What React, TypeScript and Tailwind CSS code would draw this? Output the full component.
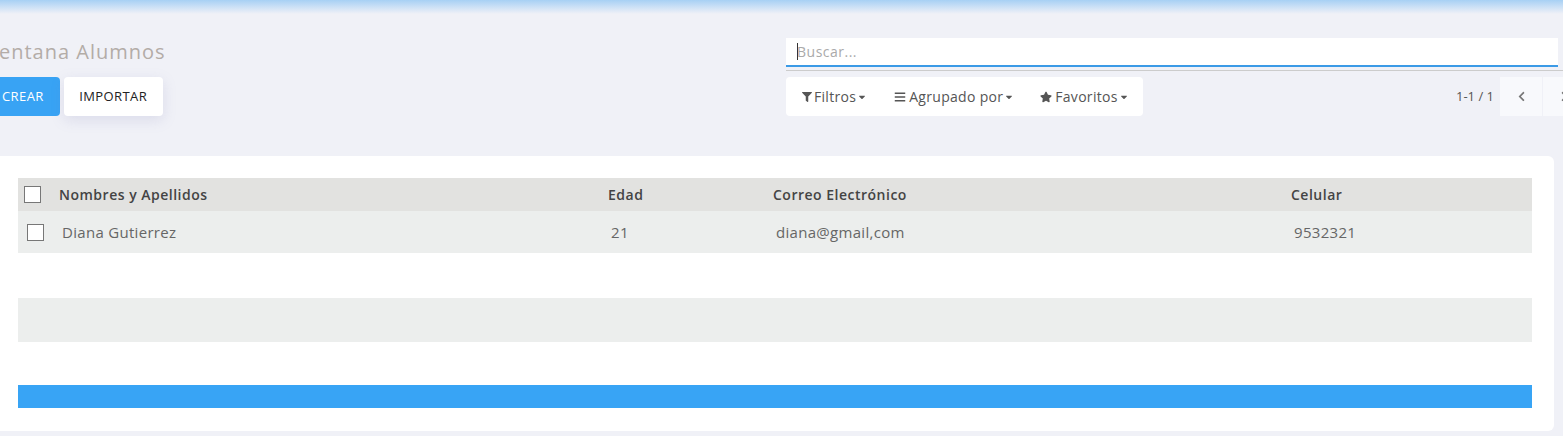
import { FaFilter, FaBars, FaStar, FaCaretDown, FaChevronLeft, FaChevronRight } from "react-icons/fa";

const font = { fontFamily: '"Open Sans", "Liberation Sans", sans-serif' };

const rows = [{ name: "Diana Gutierrez", edad: "21", correo: "diana@gmail,com", celular: "9532321" }];

const Check = ({ className }: { className?: string }) => (
  <span className={`block w-[17px] h-[17px] border border-[#777] bg-white ${className ?? ""}`} />
);

export default function App() {
  return (
    <div className="w-[1563px] h-[436px] overflow-hidden bg-[#f0f1f7] text-[#444]" style={font}>
      <div className="h-[14px] bg-gradient-to-b from-[#a7d0f4] to-[#f0f1f7]" />
      <div className="flex">
        <div className="w-[786px] pt-[24px]">
          <h1 className="ml-[-14px] text-[20px] leading-[28px] text-[#b3aca7] tracking-[1px]">Ventana Alumnos</h1>
          <div className="flex gap-[4px] mt-[11px]">
            <button className="ml-[-8px] h-[39px] pl-[10px] pr-[16px] rounded bg-[#38a3f4] text-white text-[13px] tracking-[0.4px]">
              CREAR
            </button>
            <button className="h-[39px] w-[99px] rounded bg-white text-[#222] text-[13px] tracking-[0.4px] shadow-[0_4px_14px_rgba(120,120,180,0.18)]">
              IMPORTAR
            </button>
          </div>
        </div>
        <div className="flex-1 pt-[24px]">
          <div className="border-b border-[#ccc] pb-[3px]">
            <div className="h-[29px] bg-white border-b-2 border-[#3b9ae6] mr-[5px] flex items-center pl-[11px]">
              <span className="w-px h-[17px] bg-[#333]" />
              <span className="text-[14px] text-[#aaa] ml-[-1px] tracking-[0.5px]">Buscar...</span>
            </div>
          </div>
          <div className="flex items-center mt-[6px]">
            <div className="h-[39px] w-[357px] bg-white rounded flex items-center text-[14px] text-[#555] tracking-[0.3px]">
              <span className="flex items-center ml-[16px]">
                <FaFilter className="w-[10px] h-[10px] mr-[2px]" />Filtros<FaCaretDown className="w-[10px] h-[10px] ml-[1px]" />
              </span>
              <span className="flex items-center ml-[27px]">
                <FaBars className="w-[12px] h-[12px] mr-[3px]" />Agrupado por<FaCaretDown className="w-[10px] h-[10px] ml-[1px]" />
              </span>
              <span className="flex items-center ml-[26px]">
                <FaStar className="w-[12px] h-[12px] mr-[3px]" />Favoritos<FaCaretDown className="w-[10px] h-[10px] ml-[1px]" />
              </span>
            </div>
            <div className="ml-auto mr-[-22px] flex flex-none items-center">
              <span className="text-[13px] text-[#555] mr-[6px]">1-1 / 1</span>
              <span className="w-[42px] h-[39px] bg-[#f8f9fc] flex items-center justify-center text-[#777]">
                <FaChevronLeft className="w-[11px] h-[11px]" />
              </span>
              <span className="w-[42px] h-[39px] ml-px bg-[#f8f9fc] flex items-center justify-center text-[#777]">
                <FaChevronRight className="w-[11px] h-[11px]" />
              </span>
            </div>
          </div>
        </div>
      </div>
      <div className="mt-[40px] w-[1554px] h-[275px] bg-white rounded-r-md pt-[22px] pl-[18px]">
        <div className="w-[1514px]">
          <div className="grid grid-cols-[41px_549px_165px_518px_1fr] h-[33px] items-center bg-[#e2e2e0] text-[14px] font-semibold text-[#444] tracking-[0.5px]">
            <Check className="ml-[6px]" />
            <span>Nombres y Apellidos</span>
            <span>Edad</span>
            <span>Correo Electrónico</span>
            <span>Celular</span>
          </div>
          {rows.map((r) => (
            <div
              key={r.name}
              className="grid grid-cols-[44px_549px_165px_518px_1fr] h-[42px] items-center bg-[#eceeed] text-[15px] text-[#666] tracking-[0.3px]"
            >
              <Check className="ml-[9px]" />
              <span>{r.name}</span>
              <span>{r.edad}</span>
              <span>{r.correo}</span>
              <span>{r.celular}</span>
            </div>
          ))}
          <div className="h-[45px]" />
          <div className="h-[44px] bg-[#eceeed]" />
          <div className="h-[43px]" />
          <div className="h-[23px] bg-[#38a4f5]" />
        </div>
      </div>
    </div>
  );
}
